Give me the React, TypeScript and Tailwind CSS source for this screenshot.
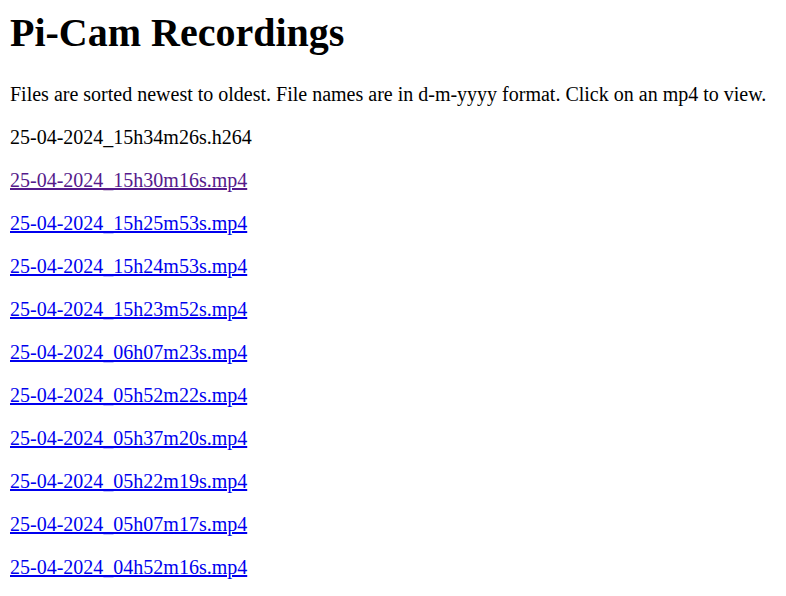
const files = [
  '25-04-2024_15h30m16s.mp4',
  '25-04-2024_15h25m53s.mp4',
  '25-04-2024_15h24m53s.mp4',
  '25-04-2024_15h23m52s.mp4',
  '25-04-2024_06h07m23s.mp4',
  '25-04-2024_05h52m22s.mp4',
  '25-04-2024_05h37m20s.mp4',
  '25-04-2024_05h22m19s.mp4',
  '25-04-2024_05h07m17s.mp4',
  '25-04-2024_04h52m16s.mp4',
];

export default function App() {
  return (
    <div className="min-h-screen bg-white px-[10px] pt-[10px] text-black font-['Liberation_Serif','Times_New_Roman',serif]">
      <h1 className="text-[40px] leading-[46px] font-bold mb-[27px]">Pi-Cam Recordings</h1>
      <p className="text-[20px] leading-[23px] mb-[20px]">
        Files are sorted newest to oldest. File names are in d-m-yyyy format. Click on an mp4 to view.
      </p>
      <p className="text-[20px] leading-[23px] mb-[20px]">25-04-2024_15h34m26s.h264</p>
      {files.map((f, i) => (
        <p key={f} className="text-[20px] leading-[23px] mb-[20px]">
          <a href="#" className={i === 0 ? 'underline text-[#551a8b]' : 'underline text-[#0000ee]'}>
            {f}
          </a>
        </p>
      ))}
    </div>
  );
}
